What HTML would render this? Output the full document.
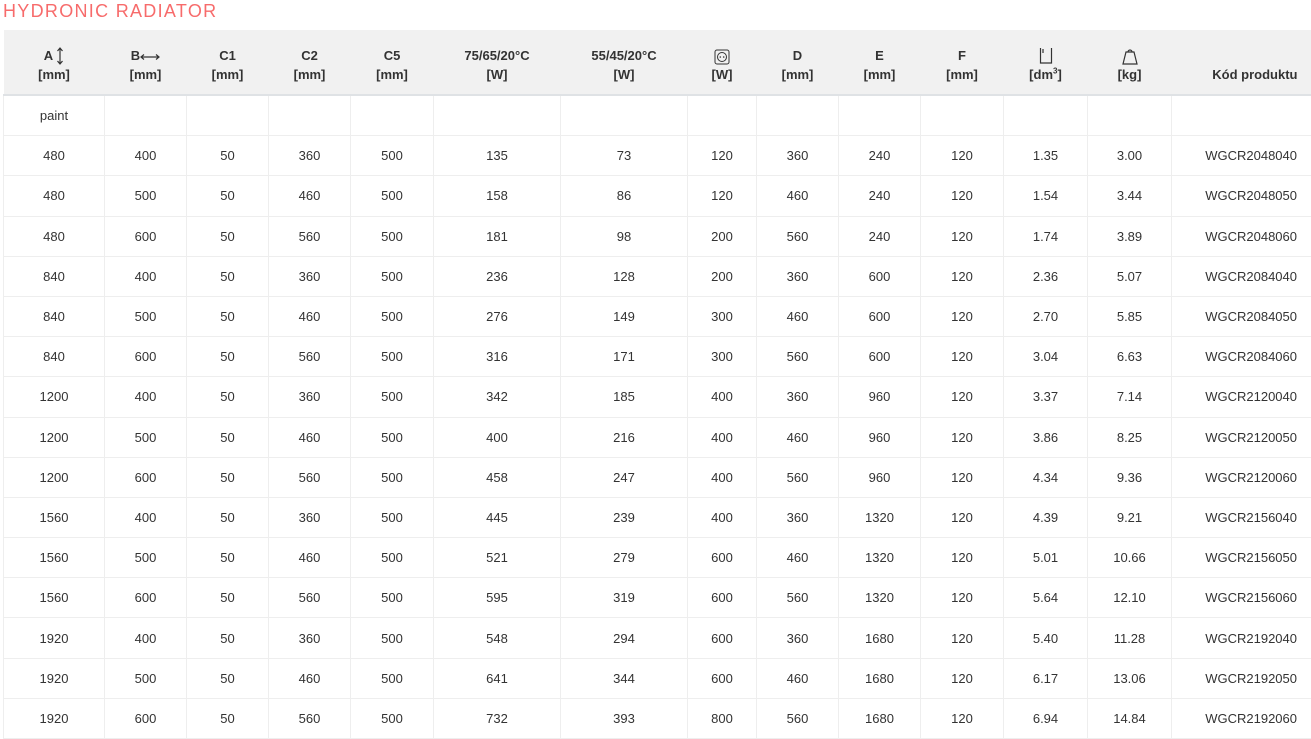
<!DOCTYPE html>
<html><head><meta charset="utf-8"><style>
body{margin:0;background:#fff;font-family:"Liberation Sans",Arial,sans-serif;color:#333;width:1311px;height:736px;overflow:hidden;position:relative}
h1{position:absolute;left:3px;top:0;margin:0;font-weight:normal;font-size:18px;line-height:22px;color:#f76b6b;letter-spacing:1.3px}
table{position:absolute;left:3px;top:30px;border-collapse:collapse;table-layout:fixed;width:1308px;font-size:13px}
th{background:#f1f1f1;height:58px;border-bottom:2px solid #dfe2e5;font-weight:bold;text-align:center;vertical-align:middle;line-height:19px;padding:6px 0 0 0;font-size:13px}
td{height:39.2px;border:1px solid #eee;text-align:center;padding:0}
td:last-child,th:last-child{text-align:right;padding-right:14px}
th:last-child span{position:relative;top:9px}
svg{vertical-align:middle}
</style></head><body>
<h1>HYDRONIC RADIATOR</h1>
<table>
<colgroup><col style="width:101px"><col style="width:82px"><col style="width:82px"><col style="width:82px"><col style="width:83px"><col style="width:127px"><col style="width:127px"><col style="width:69px"><col style="width:82px"><col style="width:82px"><col style="width:83px"><col style="width:84px"><col style="width:84px"><col style="width:140px"></colgroup>
<tr>
<th>A <svg width="8" height="18" viewBox="0 0 8 18"><path d="M4 1v16M1.5 4L4 1l2.5 3M1.5 14L4 17l2.5-3" stroke="#333" fill="none" stroke-width="1.2"/></svg><br>[mm]</th>
<th>B<svg width="20" height="8" viewBox="0 0 20 8"><path d="M1 4h18M4 1.5L1 4l3 2.5M16 1.5L19 4l-3 2.5" stroke="#333" fill="none" stroke-width="1.2"/></svg><br>[mm]</th>
<th>C1<br>[mm]</th><th>C2<br>[mm]</th><th>C5<br>[mm]</th>
<th>75/65/20°C<br>[W]</th><th>55/45/20°C<br>[W]</th>
<th><svg width="16" height="16" viewBox="0 0 16 16"><rect x="1" y="1" width="14" height="14" rx="2" fill="none" stroke="#333"/><circle cx="8" cy="8" r="4.5" fill="none" stroke="#333"/><circle cx="6.3" cy="8" r=".8" fill="#333"/><circle cx="9.7" cy="8" r=".8" fill="#333"/></svg><br>[W]</th>
<th>D<br>[mm]</th><th>E<br>[mm]</th><th>F<br>[mm]</th>
<th><svg width="14" height="18" viewBox="0 0 14 18"><path d="M1.5 1v15h11V1M4 2v4" stroke="#333" fill="none" stroke-width="1.2"/></svg><br>[dm<sup style="font-size:8px;line-height:0">3</sup>]</th>
<th><svg width="16" height="18" viewBox="0 0 16 18"><path d="M1 17l3-12h8l3 12z M6 5a2 2 0 0 1 4 0" stroke="#333" fill="none" stroke-width="1.2"/></svg><br>[kg]</th>
<th><span>Kód produktu</span></th>
</tr>
<tr><td>paint</td><td></td><td></td><td></td><td></td><td></td><td></td><td></td><td></td><td></td><td></td><td></td><td></td><td></td></tr>
<tr><td>480</td><td>400</td><td>50</td><td>360</td><td>500</td><td>135</td><td>73</td><td>120</td><td>360</td><td>240</td><td>120</td><td>1.35</td><td>3.00</td><td>WGCR2048040</td></tr>
<tr><td>480</td><td>500</td><td>50</td><td>460</td><td>500</td><td>158</td><td>86</td><td>120</td><td>460</td><td>240</td><td>120</td><td>1.54</td><td>3.44</td><td>WGCR2048050</td></tr>
<tr><td>480</td><td>600</td><td>50</td><td>560</td><td>500</td><td>181</td><td>98</td><td>200</td><td>560</td><td>240</td><td>120</td><td>1.74</td><td>3.89</td><td>WGCR2048060</td></tr>
<tr><td>840</td><td>400</td><td>50</td><td>360</td><td>500</td><td>236</td><td>128</td><td>200</td><td>360</td><td>600</td><td>120</td><td>2.36</td><td>5.07</td><td>WGCR2084040</td></tr>
<tr><td>840</td><td>500</td><td>50</td><td>460</td><td>500</td><td>276</td><td>149</td><td>300</td><td>460</td><td>600</td><td>120</td><td>2.70</td><td>5.85</td><td>WGCR2084050</td></tr>
<tr><td>840</td><td>600</td><td>50</td><td>560</td><td>500</td><td>316</td><td>171</td><td>300</td><td>560</td><td>600</td><td>120</td><td>3.04</td><td>6.63</td><td>WGCR2084060</td></tr>
<tr><td>1200</td><td>400</td><td>50</td><td>360</td><td>500</td><td>342</td><td>185</td><td>400</td><td>360</td><td>960</td><td>120</td><td>3.37</td><td>7.14</td><td>WGCR2120040</td></tr>
<tr><td>1200</td><td>500</td><td>50</td><td>460</td><td>500</td><td>400</td><td>216</td><td>400</td><td>460</td><td>960</td><td>120</td><td>3.86</td><td>8.25</td><td>WGCR2120050</td></tr>
<tr><td>1200</td><td>600</td><td>50</td><td>560</td><td>500</td><td>458</td><td>247</td><td>400</td><td>560</td><td>960</td><td>120</td><td>4.34</td><td>9.36</td><td>WGCR2120060</td></tr>
<tr><td>1560</td><td>400</td><td>50</td><td>360</td><td>500</td><td>445</td><td>239</td><td>400</td><td>360</td><td>1320</td><td>120</td><td>4.39</td><td>9.21</td><td>WGCR2156040</td></tr>
<tr><td>1560</td><td>500</td><td>50</td><td>460</td><td>500</td><td>521</td><td>279</td><td>600</td><td>460</td><td>1320</td><td>120</td><td>5.01</td><td>10.66</td><td>WGCR2156050</td></tr>
<tr><td>1560</td><td>600</td><td>50</td><td>560</td><td>500</td><td>595</td><td>319</td><td>600</td><td>560</td><td>1320</td><td>120</td><td>5.64</td><td>12.10</td><td>WGCR2156060</td></tr>
<tr><td>1920</td><td>400</td><td>50</td><td>360</td><td>500</td><td>548</td><td>294</td><td>600</td><td>360</td><td>1680</td><td>120</td><td>5.40</td><td>11.28</td><td>WGCR2192040</td></tr>
<tr><td>1920</td><td>500</td><td>50</td><td>460</td><td>500</td><td>641</td><td>344</td><td>600</td><td>460</td><td>1680</td><td>120</td><td>6.17</td><td>13.06</td><td>WGCR2192050</td></tr>
<tr><td>1920</td><td>600</td><td>50</td><td>560</td><td>500</td><td>732</td><td>393</td><td>800</td><td>560</td><td>1680</td><td>120</td><td>6.94</td><td>14.84</td><td>WGCR2192060</td></tr>
</table>
</body></html>
